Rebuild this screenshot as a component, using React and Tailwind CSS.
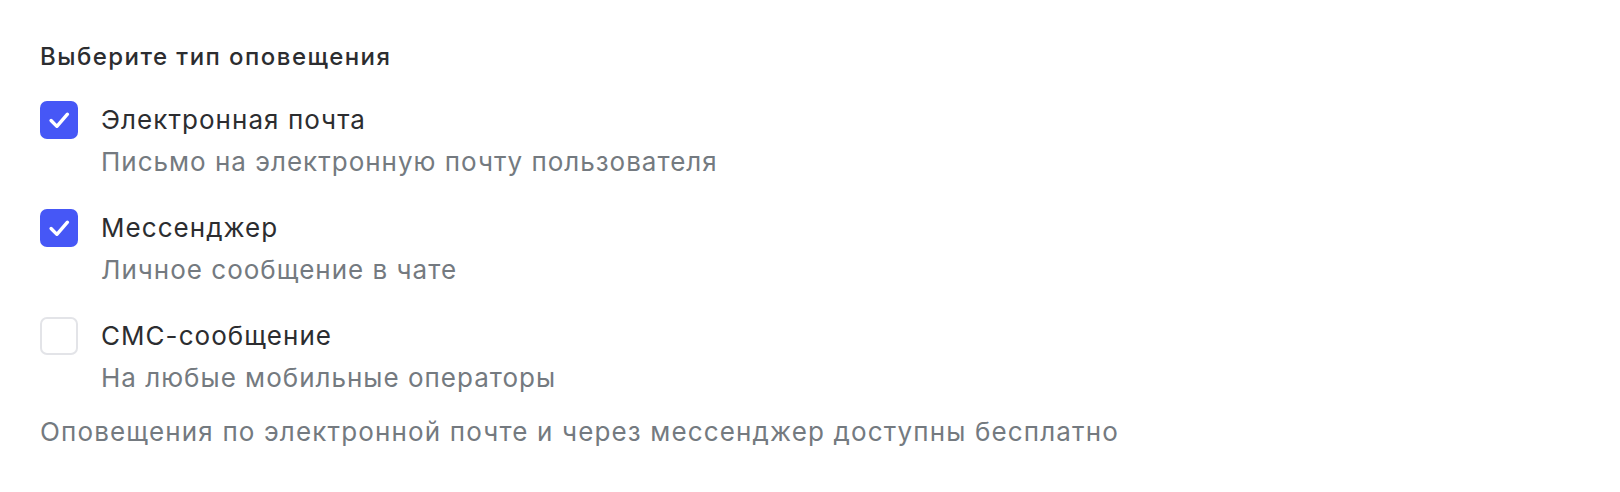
const options = [
  { title: 'Электронная почта', desc: 'Письмо на электронную почту пользователя', checked: true },
  { title: 'Мессенджер', desc: 'Личное сообщение в чате', checked: true },
  { title: 'СМС-сообщение', desc: 'На любые мобильные операторы', checked: false },
];

const CheckMark = () => (
  <svg viewBox="0 0 36 36" className="w-full h-full" fill="none">
    <path d="M10.5 18.5 L16 24 L26 12.5" stroke="#fff" strokeWidth="3.2" strokeLinecap="round" strokeLinejoin="round" />
  </svg>
);

const App = () => {
  return (
    <div className="w-[1620px] h-[492px] bg-white px-10 pt-[42px] font-['Inter',sans-serif]">
      <h3 className="text-[24px] leading-[30px] font-medium tracking-[1.45px] text-[#2c2d30]">
        Выберите тип оповещения
      </h3>
      <div className="mt-[28px] flex flex-col gap-[24px]">
        {options.map((o) => (
          <label key={o.title} className="flex items-start gap-[23px]">
            <span
              className={
                o.checked
                  ? 'mt-[1px] w-[38px] h-[38px] rounded-[7px] bg-[#4657f6] shrink-0'
                  : 'mt-[1px] w-[38px] h-[38px] rounded-[7px] border-2 border-[#e3e4e8] bg-white shrink-0'
              }
            >
              {o.checked && <CheckMark />}
            </span>
            <span className="flex flex-col">
              <span className="text-[26px] leading-[40px] tracking-[1.05px] text-[#2c2d30]">{o.title}</span>
              <span className="text-[26px] leading-[44px] tracking-[1px] text-[#747a80]">{o.desc}</span>
            </span>
          </label>
        ))}
      </div>
      <p className="mt-[12px] text-[26px] leading-[40px] tracking-[1.15px] text-[#747a80]">
        Оповещения по электронной почте и через мессенджер доступны бесплатно
      </p>
    </div>
  );
};

export default App;
